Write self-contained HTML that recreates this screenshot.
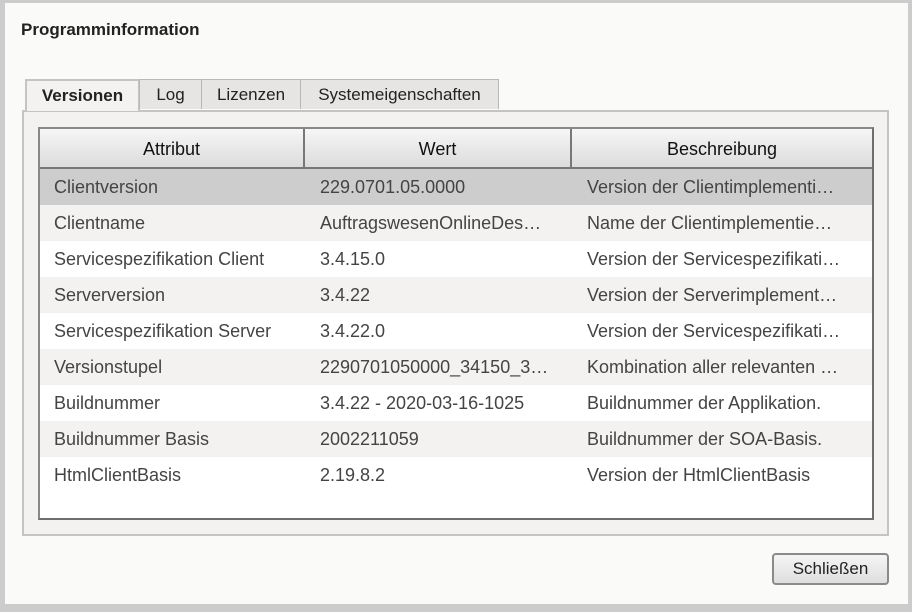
<!DOCTYPE html>
<html><head><style>
body{margin:0;width:912px;height:612px;background:#cccccc;font-family:"Liberation Sans",sans-serif;position:relative;overflow:hidden}
#win{position:absolute;left:5px;top:3px;width:903px;height:601px;background:#fafaf9}
.t{position:absolute;font-size:17px;color:#222}
.tab{position:absolute;top:79px;height:30px;border:1px solid #b8b8b8;border-bottom:none;background:#e6e5e3;font-size:17px;color:#222;text-align:center;line-height:30px;box-sizing:border-box}
#panel{position:absolute;left:22px;top:110px;width:867px;height:426px;border:2px solid #c4c4c4;box-sizing:border-box;background:#f3f2f0}
#tbl{position:absolute;left:38px;top:127px;width:836px;height:393px;border:2px solid #6e6e6e;box-sizing:border-box;background:#fff;border-top-color:#888;border-left-color:#888}
.hd{position:absolute;top:0;height:40px;line-height:40px;text-align:center;font-size:18px;color:#111;background:linear-gradient(#f6f6f6,#dcdcdc);border-right:2px solid #777;border-bottom:2px solid #777;box-sizing:border-box}
.row{position:absolute;left:0;width:832px;height:36px;font-size:18px;color:#444;line-height:36px}
.row span{position:absolute;white-space:nowrap;overflow:hidden}
</style></head><body>
<div id="win"></div>
<div class="t" style="left:21px;top:20px;font-weight:bold">Programminformation</div>
<div id="panel"></div>
<div class="tab" style="left:25px;width:115px;background:#f3f2f0;font-weight:bold;height:32px;border-width:2px;border-color:#c4c4c4">Versionen</div>
<div class="tab" style="left:139px;width:63px">Log</div>
<div class="tab" style="left:201px;width:100px">Lizenzen</div>
<div class="tab" style="left:300px;width:199px">Systemeigenschaften</div>
<div id="tbl">
<div class="hd" style="left:0;width:265px">Attribut</div>
<div class="hd" style="left:265px;width:267px">Wert</div>
<div class="hd" style="left:532px;width:300px;border-right:none">Beschreibung</div>
<div class="row" style="top:40px;background:#cdcdcd"><span style="left:14px">Clientversion</span><span style="left:280px">229.0701.05.0000</span><span style="left:547px">Version der Clientimplementi…</span></div>
<div class="row" style="top:76px;background:#f3f2f0"><span style="left:14px">Clientname</span><span style="left:280px">AuftragswesenOnlineDes…</span><span style="left:547px">Name der Clientimplementie…</span></div>
<div class="row" style="top:112px;background:#fff"><span style="left:14px">Servicespezifikation Client</span><span style="left:280px">3.4.15.0</span><span style="left:547px">Version der Servicespezifikati…</span></div>
<div class="row" style="top:148px;background:#f3f2f0"><span style="left:14px">Serverversion</span><span style="left:280px">3.4.22</span><span style="left:547px">Version der Serverimplement…</span></div>
<div class="row" style="top:184px;background:#fff"><span style="left:14px">Servicespezifikation Server</span><span style="left:280px">3.4.22.0</span><span style="left:547px">Version der Servicespezifikati…</span></div>
<div class="row" style="top:220px;background:#f3f2f0"><span style="left:14px">Versionstupel</span><span style="left:280px">2290701050000_34150_3…</span><span style="left:547px">Kombination aller relevanten …</span></div>
<div class="row" style="top:256px;background:#fff"><span style="left:14px">Buildnummer</span><span style="left:280px">3.4.22 - 2020-03-16-1025</span><span style="left:547px">Buildnummer der Applikation.</span></div>
<div class="row" style="top:292px;background:#f3f2f0"><span style="left:14px">Buildnummer Basis</span><span style="left:280px">2002211059</span><span style="left:547px">Buildnummer der SOA-Basis.</span></div>
<div class="row" style="top:328px;background:#fff"><span style="left:14px">HtmlClientBasis</span><span style="left:280px">2.19.8.2</span><span style="left:547px">Version der HtmlClientBasis</span></div>
</div>
<div style="position:absolute;left:772px;top:553px;width:117px;height:32px;box-sizing:border-box;border:2px solid #8a8a8a;border-radius:4px;background:linear-gradient(#f5f5f5,#dedede);font-size:17px;color:#222;text-align:center;line-height:28px">Schließen</div>
</body></html>
